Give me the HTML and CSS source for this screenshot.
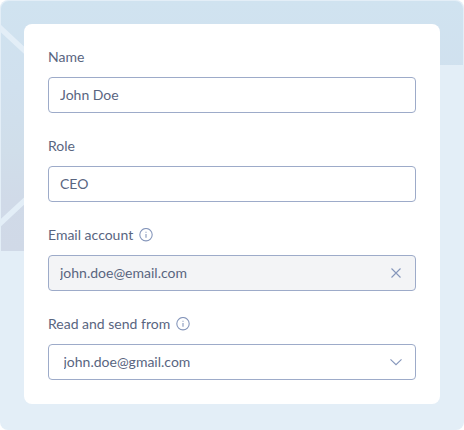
FILE: index.html
```html
<!DOCTYPE html>
<html lang="en">

<head>
  <meta charset="UTF-8">
  <meta name="viewport" content="width=device-width, initial-scale=1.0">
  <title>Account settings</title>
  <link rel="stylesheet" href="styles.css">
</head>

<body>
  <div class="panel">
    <!-- Envelope shape behind the card -->
    <svg class="backdrop" width="464" height="430" viewBox="0 0 464 430" aria-hidden="true">
      <defs>
        <linearGradient id="envelope" gradientUnits="userSpaceOnUse" x1="0" y1="0" x2="0" y2="251">
          <stop offset="0" stop-color="#d0e3f0" />
          <stop offset="0.35" stop-color="#d0e0ee" />
          <stop offset="0.6" stop-color="#d0deea" />
          <stop offset="0.8" stop-color="#d0dae8" />
          <stop offset="1" stop-color="#d0d9e7" />
        </linearGradient>
      </defs>
      <path d="M1 251V9a8 8 0 0 1 8-8h446a8 8 0 0 1 8 8v56H200v186z" fill="url(#envelope)" />
      <path d="M1 25l30 27.900v7.400L1 32.400zM1 218.800l30-27.900v7.400L1 226.200z" fill="#e3eef7" />
    </svg>

    <form class="card">
      <div class="field">
        <label for="name">Name</label>
        <div class="input-box">
          <input type="text" id="name" value="John Doe">
        </div>
      </div>

      <div class="field">
        <label for="role">Role</label>
        <div class="input-box">
          <input type="text" id="role" value="CEO">
        </div>
      </div>

      <div class="field">
        <label for="email">Email account
          <svg class="info" width="14" height="14" viewBox="0 0 14 14">
            <circle cx="7" cy="6.700" r="6.200" />
            <path d="M7 6v3.700M7 3.700v1.100" />
          </svg>
        </label>
        <div class="input-box filled">
          <input type="text" id="email" value="john.doe@email.com" readonly>
          <svg class="icon" width="12" height="12" viewBox="0 0 12 12">
            <path d="M1.500 1.500l9 9M10.500 1.500l-9 9" />
          </svg>
        </div>
      </div>

      <div class="field">
        <label for="sender">Read and send from
          <svg class="info" width="14" height="14" viewBox="0 0 14 14">
            <circle cx="7" cy="6.700" r="6.200" />
            <path d="M7 6v3.700M7 3.700v1.100" />
          </svg>
        </label>
        <div class="input-box select">
          <input type="text" id="sender" value="john.doe@gmail.com" readonly>
          <svg class="icon" width="12" height="12" viewBox="0 0 12 12">
            <path d="M0.500 3.300L6 8.700l5.500-5.400" />
          </svg>
        </div>
      </div>
    </form>
  </div>
</body>

</html>
```
FILE: styles.css
```css
* {
  box-sizing: border-box;
}

body {
  margin: 0;
  background-color: white;
  font-family: Lato, "Liberation Sans", sans-serif;
  font-size: 14px;
  color: #59657f;
}

.panel {
  position: relative;
  width: 464px;
  height: 430px;
  padding: 24px;
  border-radius: 8px;
  background-color: #e3eef7;
  overflow: hidden;
}

.backdrop {
  position: absolute;
  top: 0;
  left: 0;
}

.card {
  position: relative;
  display: flex;
  flex-direction: column;
  gap: 24px;
  height: 380px;
  padding: 24px;
  border-radius: 8px;
  background-color: white;
}

.field {
  display: flex;
  flex-direction: column;
  gap: 11px;
}

label {
  display: flex;
  align-items: center;
  gap: 6px;
  height: 18px;
  line-height: 18px;
}

.input-box {
  display: flex;
  align-items: center;
  height: 36px;
  padding: 0 13px 0 11px;
  border: 1px solid #9dabc9;
  border-radius: 4px;
  background-color: white;
}

.input-box.filled {
  background-color: #f3f4f6;
}

.input-box.select {
  padding-left: 14.500px;
}

input {
  flex: 1;
  min-width: 0;
  padding: 0 0 2px;
  border: none;
  outline: none;
  background: none;
  font: inherit;
  color: inherit;
}

.info,
.icon {
  flex: none;
  fill: none;
  stroke: #8596bb;
  stroke-width: 1.100;
}
```
